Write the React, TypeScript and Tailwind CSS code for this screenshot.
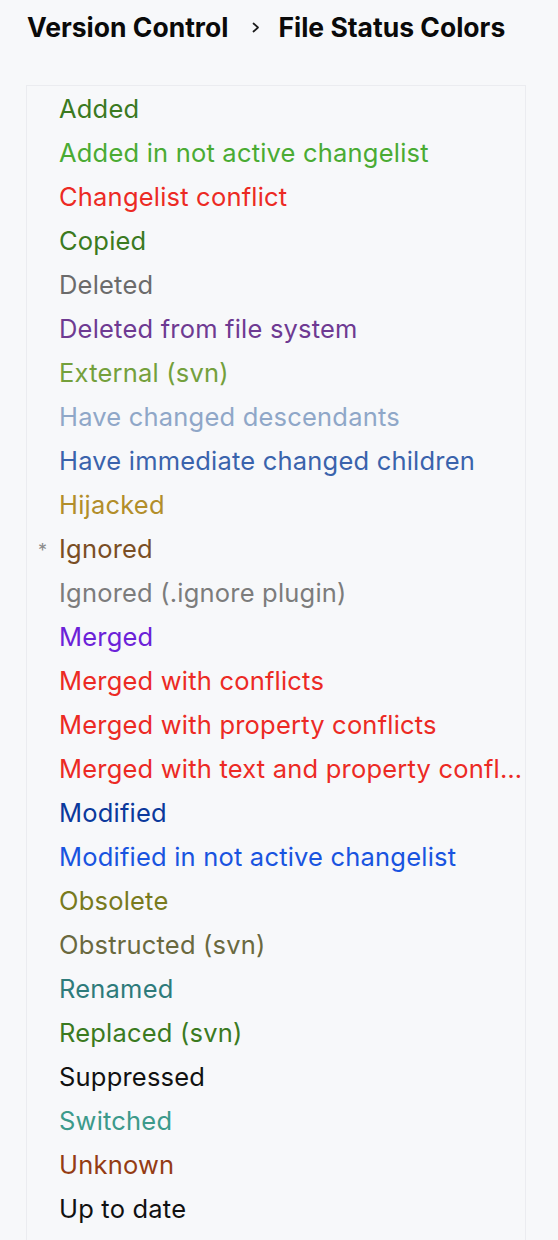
import React from "react";

const items: { label: string; color: string; star?: boolean }[] = [
  { label: "Added", color: "#3b7a1f" },
  { label: "Added in not active changelist", color: "#4aab33" },
  { label: "Changelist conflict", color: "#ec2a24" },
  { label: "Copied", color: "#3b7a1f" },
  { label: "Deleted", color: "#6b6b6b" },
  { label: "Deleted from file system", color: "#6e3a92" },
  { label: "External (svn)", color: "#74a03c" },
  { label: "Have changed descendants", color: "#8fa7c8" },
  { label: "Have immediate changed children", color: "#3a63ac" },
  { label: "Hijacked", color: "#b28e2a" },
  { label: "Ignored", color: "#7a4e24", star: true },
  { label: "Ignored (.ignore plugin)", color: "#7c7c7c" },
  { label: "Merged", color: "#6c22d8" },
  { label: "Merged with conflicts", color: "#ec2a24" },
  { label: "Merged with property conflicts", color: "#ec2a24" },
  { label: "Merged with text and property conflicts", color: "#ec2a24" },
  { label: "Modified", color: "#0b399c" },
  { label: "Modified in not active changelist", color: "#1954e0" },
  { label: "Obsolete", color: "#787a1d" },
  { label: "Obstructed (svn)", color: "#6a693f" },
  { label: "Renamed", color: "#2e7b7b" },
  { label: "Replaced (svn)", color: "#3b7a1f" },
  { label: "Suppressed", color: "#111111" },
  { label: "Switched", color: "#3c9a8b" },
  { label: "Unknown", color: "#943c14" },
  { label: "Up to date", color: "#111111" },
];

export default function App() {
  return (
    <div
      className="w-[558px] h-[1240px] overflow-hidden bg-[#f7f8fa]"
      style={{ fontFamily: "Inter, 'Noto Sans', sans-serif" }}
    >
      <div className="h-[55px] pl-[27px] flex items-center text-[26.5px] font-bold text-[#0a0a0a]">
        <span>Version Control</span>
        <svg className="ml-[24px] mr-[18px]" width="8" height="11" viewBox="0 0 8 11" fill="none">
          <path d="M1.5 1.5 L6 5.5 L1.5 9.5" stroke="#1a1a1a" strokeWidth="1.7" strokeLinecap="round" strokeLinejoin="round" />
        </svg>
        <span>File Status Colors</span>
      </div>
      <div className="mt-[30px] ml-[26px] w-[500px] h-[1200px] border border-[#ebecf0] bg-[#f7f8fa] pt-[1px]">
        {items.map((it) => (
          <div key={it.label} className="h-[44px] flex items-center relative">
            {it.star && (
              <span className="absolute left-[11px] top-[10px] text-[18px] text-[#8a8a8a]">*</span>
            )}
            <span
              className="pl-[32px] pr-[2px] truncate text-[25.5px] tracking-[0.2px]"
              style={{ color: it.color }}
            >
              {it.label}
            </span>
          </div>
        ))}
      </div>
    </div>
  );
}
